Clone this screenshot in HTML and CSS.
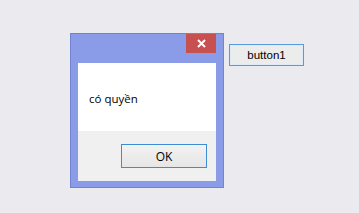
FILE: index.html
```html
<!DOCTYPE html>
<html>
    <head>
        <meta charset="utf-8">
        <title>Form1</title>
        <link rel="stylesheet" href="styles.css">
    </head>
    <body class="desktop">
        <div class="window">
            <div class="titlebar">
                <div class="close">
                    <svg width="9" height="9" viewBox="0 0 9 9">
                        <path d="M1 1 L8 8 M8 1 L1 8" stroke="#fff" stroke-width="2" fill="none"/>
                    </svg>
                </div>
            </div>
            <div class="client">
                <div class="message">có quyền</div>
                <div class="footer">
                    <button class="okButton">OK</button>
                </div>
            </div>
        </div>

        <button class="button1">button1</button>
    </body>
</html>
```

FILE: styles.css
```css
html, body {
    margin: 0;
    height: 100%;
}
.desktop {
    background: #ebebef;
    position: relative;
    overflow: hidden;
}
.window {
    position: absolute;
    left: 70px;
    top: 33px;
    width: 154px;
    height: 155px;
    box-sizing: border-box;
    border: 1px solid #7283d2;
    background: #8a9be8;
    padding: 0 7px 6px 7px;
    display: flex;
    flex-direction: column;
}
.titlebar {
    height: 29px;
    display: flex;
    justify-content: flex-end;
    align-items: flex-start;
}
.close {
    width: 30px;
    height: 19px;
    background: #c75050;
    display: flex;
    align-items: center;
    justify-content: center;
}
.close svg {
    display: block;
}
.client {
    flex: 1;
    display: flex;
    flex-direction: column;
}
.message {
    height: 68px;
    background: #fff;
    display: flex;
    align-items: center;
    padding-left: 11px;
    padding-top: 2px;
    box-sizing: border-box;
    font-family: "Open Sans", sans-serif;
    font-size: 11.5px;
    color: #000;
}
.footer {
    flex: 1;
    background: #f0f0f0;
    display: flex;
    justify-content: flex-end;
    align-items: flex-start;
    padding: 13px 9px 0 0;
}
.okButton {
    width: 86px;
    height: 24px;
    margin: 0;
    padding: 0;
    border: 1px solid #3c8dd6;
    background: linear-gradient(#f2f2f2, #e6e6e6);
    font-family: "Open Sans", sans-serif;
    font-size: 12px;
    color: #000;
}
.button1 {
    position: absolute;
    left: 229px;
    top: 44px;
    width: 75px;
    height: 22px;
    margin: 0;
    padding: 0;
    border: 1px solid #5a9ad6;
    box-shadow: inset 0 0 0 1px #dcecfc;
    background: #ececec;
    font-family: "Liberation Sans", sans-serif;
    font-size: 11.5px;
    color: #000;
}
```
